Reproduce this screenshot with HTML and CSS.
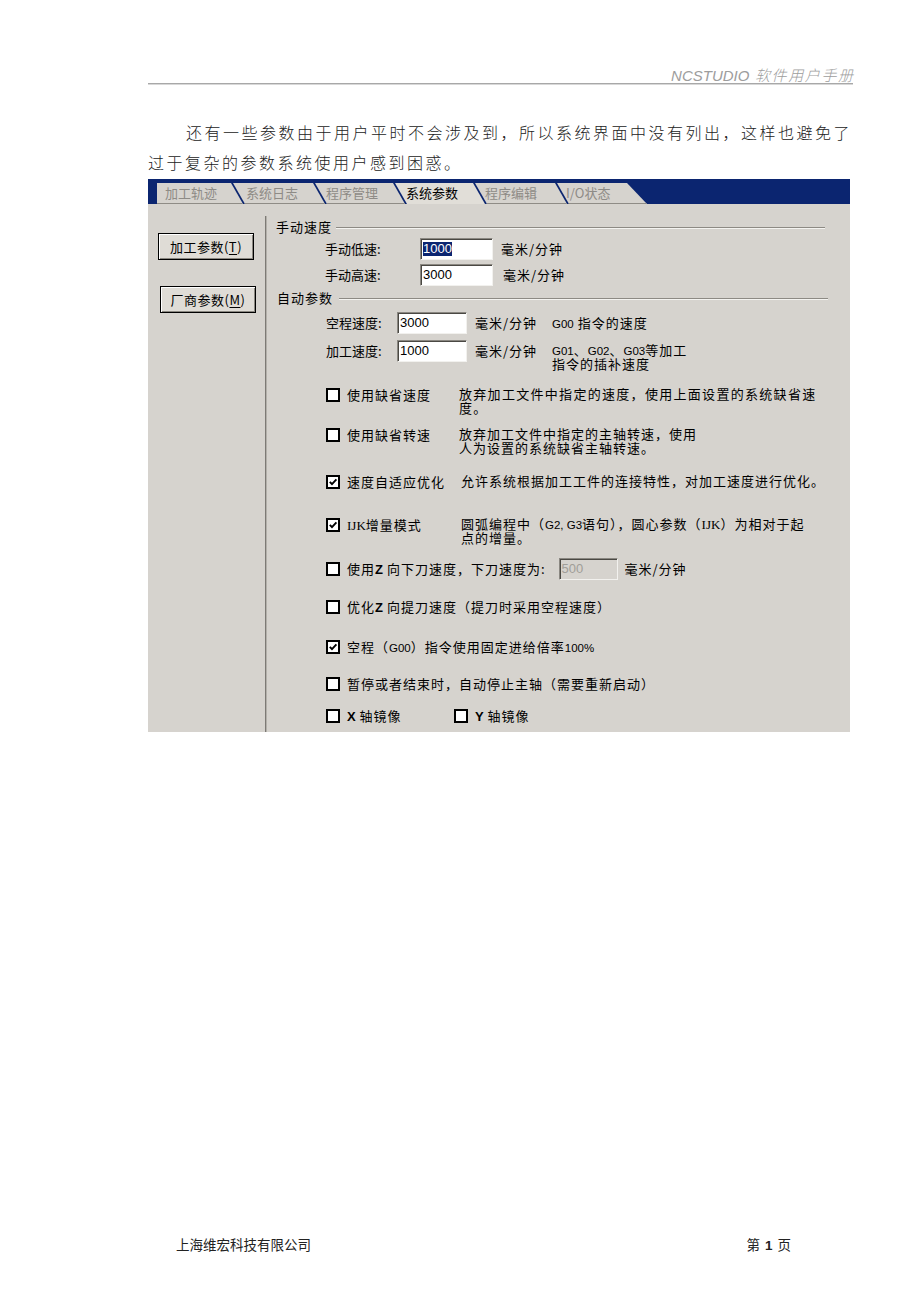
FILE: index.html
```html
<!DOCTYPE html>
<html lang="zh-CN">
<head>
<meta charset="utf-8">
<title>NCSTUDIO 软件用户手册</title>
<link rel="stylesheet" href="styles.css">
</head>
<body>
<header class="doc-head"><span class="head-en">NCSTUDIO</span> <span class="head-zh">软件用户手册</span></header>

<p class="intro">还有一些参数由于用户平时不会涉及到，所以系统界面中没有列出，这样也避免了<br>过于复杂的参数系统使用户感到困惑。</p>

<div class="shot">
  <div class="tabbar">
    <div class="tab first">加工轨迹</div>
    <div class="tab t2">系统日志</div>
    <div class="tab t3">程序管理</div>
    <div class="tab t4 active">系统参数</div>
    <div class="tab t5">程序编辑</div>
    <div class="tab t6">I/O状态</div>
  </div>
  <div class="body">
    <div class="side">
      <div class="btn">加工参数(<u>T</u>)</div>
      <div class="btn btn2">厂商参数(<u>M</u>)</div>
    </div>
    <div class="divider"></div>
    <div class="pane">
      <div class="group"><span class="glabel">手动速度</span><span class="etch"></span></div>
      <div class="frow r1">
        <span class="flabel fl1">手动低速:</span>
        <span class="field f1"><span class="sel">1000</span></span>
        <span class="unit">毫米/分钟</span>
      </div>
      <div class="frow r2">
        <span class="flabel fl1">手动高速:</span>
        <span class="field f1"><span class="num">3000</span></span>
        <span class="unit u2">毫米/分钟</span>
      </div>

      <div class="group g2"><span class="glabel">自动参数</span><span class="etch e2"></span></div>
      <div class="frow a1">
        <span class="flabel fl2">空程速度:</span>
        <span class="field f2"><span class="num">3000</span></span>
        <span class="unit u3">毫米/分钟</span>
        <span class="note"><span class="lat">G00</span> 指令的速度</span>
      </div>
      <div class="frow a2">
        <span class="flabel fl2">加工速度:</span>
        <span class="field f2"><span class="num">1000</span></span>
        <span class="unit u3">毫米/分钟</span>
        <span class="note note2"><span class="ln"><span class="lat">G01</span>、<span class="lat">G02</span>、<span class="lat">G03</span>等加工</span><span class="ln">指令的插补速度</span></span>
      </div>

      <div class="crow c1">
        <span class="cb"></span>
        <span class="clabel">使用缺省速度</span>
        <span class="desc d1"><span class="ln">放弃加工文件中指定的速度，使用上面设置的系统缺省速</span><span class="ln">度。</span></span>
      </div>
      <div class="crow c2">
        <span class="cb"></span>
        <span class="clabel">使用缺省转速</span>
        <span class="desc"><span class="ln">放弃加工文件中指定的主轴转速，使用</span><span class="ln">人为设置的系统缺省主轴转速。</span></span>
      </div>
      <div class="crow c3">
        <span class="cb on"><svg viewBox="0 0 10 10" width="10" height="10"><path d="M1.8 4.8 L4 7.2 L8.4 2.4" fill="none" stroke="#000" stroke-width="1.9"/></svg></span>
        <span class="clabel">速度自适应优化</span>
        <span class="desc d2">允许系统根据加工工件的连接特性，对加工速度进行优化。</span>
      </div>
      <div class="crow c4">
        <span class="cb on"><svg viewBox="0 0 10 10" width="10" height="10"><path d="M1.8 4.8 L4 7.2 L8.4 2.4" fill="none" stroke="#000" stroke-width="1.9"/></svg></span>
        <span class="clabel"><span class="ijk">IJK</span>增量模式</span>
        <span class="desc d2"><span class="ln">圆弧编程中（<span class="lat">G2, G3</span>语句），圆心参数（<span class="ijk">IJK</span>）为相对于起</span><span class="ln">点的增量。</span></span>
      </div>
      <div class="crow c5">
        <span class="cb"></span>
        <span class="ctext">使用<b>Z</b> 向下刀速度，下刀速度为:</span>
        <span class="field f3"><span class="num dis">500</span></span>
        <span class="unit u5">毫米/分钟</span>
      </div>
      <div class="crow c6">
        <span class="cb"></span>
        <span class="ctext">优化<b>Z</b> 向提刀速度（提刀时采用空程速度）</span>
      </div>
      <div class="crow c7">
        <span class="cb on"><svg viewBox="0 0 10 10" width="10" height="10"><path d="M1.8 4.8 L4 7.2 L8.4 2.4" fill="none" stroke="#000" stroke-width="1.9"/></svg></span>
        <span class="ctext">空程（<span class="lat">G00</span>）指令使用固定进给倍率<span class="lat">100%</span></span>
      </div>
      <div class="crow c8">
        <span class="cb"></span>
        <span class="ctext">暂停或者结束时，自动停止主轴（需要重新启动）</span>
      </div>
      <div class="crow c9">
        <span class="cb"></span>
        <span class="clabel xl"><b>X</b> 轴镜像</span>
        <span class="cb"></span>
        <span class="ctext"><b>Y</b> 轴镜像</span>
      </div>
    </div>
  </div>
</div>

<footer class="doc-foot">
  <span>上海维宏科技有限公司</span>
  <span>第<b>1</b>页</span>
</footer>
</body>
</html>
```

FILE: styles.css
```css
* { box-sizing: border-box; }
html, body { margin: 0; padding: 0; background: #fff; }
body {
  width: 920px;
  height: 1302px;
  overflow: hidden;
  font-family: "Noto Sans CJK SC", "Liberation Sans", sans-serif;
  color: #000;
}

/* document header */
.doc-head {
  margin-left: 148px;
  width: 705px;
  height: 84px;
  padding-top: 65px;
  border-bottom: 1px solid #a8a8a8;
  box-shadow: 0 1px 0 #d8d8d8;
  text-align: right;
  line-height: 18px;
  color: #9d9d9d;
  font-style: italic;
  white-space: nowrap;
}
.head-en { font-family: "Liberation Sans", sans-serif; font-size: 15px; margin-right: 2px; }
.head-zh { font-size: 15px; letter-spacing: 1.6px; font-weight: 300; margin-right: -1.6px; }

/* intro paragraph */
.intro {
  margin: 33px 0 0 148px;
  width: 712px;
  font-size: 16px;
  line-height: 30px;
  letter-spacing: 2.5px;
  text-indent: 38px;
  color: #222;
  font-weight: 300;
  white-space: nowrap;
}

/* screenshot of the software */
.shot {
  margin: 2px 0 0 148px;
  width: 702px;
  height: 553px;
  background: #d6d3ce;
  overflow: hidden;
}
.tabbar {
  height: 25px;
  background: #0b2570;
  display: flex;
  align-items: flex-end;
  padding-left: 9px;
}
.tab {
  flex: none;
  height: 21px;
  margin-left: -10px;
  padding-left: 11px;
  background: #d6d3ce;
  color: #8e8b86;
  font-size: 13px;
  line-height: 20px;
  white-space: nowrap;
  border-bottom: 1px solid #8f8c86;
  clip-path: polygon(0 0, calc(100% - 12px) 0, 100% 100%, 12px 100%);
}
.tab.first {
  margin-left: 0;
  width: 86px;
  padding-left: 8px;
  clip-path: polygon(0 0, calc(100% - 12px) 0, 100% 100%, 0 100%);
}
.tab.t2 { width: 92px; padding-left: 13px; }
.tab.t3 { width: 90px; }
.tab.t4 { width: 90px; }
.tab.t5 { width: 92px; padding-left: 10px; }
.tab.t6 {
  width: 90px;
  padding-left: 9px;
  clip-path: polygon(0 0, calc(100% - 20px) 0, 100% 100%, 12px 100%);
}
.tab.active {
  background: #e1ded8;
  color: #000;
  border-bottom: none;
}

.body { display: flex; height: 528px; }
.side { flex: none; width: 117px; padding: 29px 0 0 10px; }
.btn {
  width: 96px;
  height: 27px;
  border: 1px solid #000;
  background: #dfdcd6;
  box-shadow: inset 1px 1px 0 #fff, inset -1px -1px 0 #8a8780;
  display: flex;
  align-items: center;
  justify-content: center;
  font-size: 13px;
  letter-spacing: 0.5px;
}
.btn u { text-underline-offset: 2px; }
.btn2 { margin-top: 26px; margin-left: 2px; }
.divider {
  flex: none;
  width: 2px;
  margin-top: 12px;
  border-left: 1px solid #7d7a75;
  border-right: 1px solid #b3b0aa;
}

.pane {
  flex: 1;
  padding: 15px 0 0 9px;
  font-size: 13px;
  letter-spacing: 1px;
  line-height: 16px;
  white-space: nowrap;
}
.group { display: flex; align-items: center; height: 16px; }
.g2 { margin-top: 4px; padding-left: 1px; }
.etch {
  flex: 1;
  height: 2px;
  margin: 2px 25px 0 4px;
  border-top: 1px solid #8d8a84;
  border-bottom: 1px solid #f4f3f0;
}
.etch.e2 { margin-left: 6px; margin-right: 22px; }

.frow { display: flex; align-items: center; height: 22px; }
.r1 { margin-top: 3px; }
.r2 { margin-top: 4px; }
.a1 { margin-top: 6px; }
.a2 { margin-top: 6px; align-items: flex-start; height: auto; }
.flabel { flex: none; line-height: 22px; letter-spacing: 0; }
.fl1 { margin-left: 49px; width: 95px; }
.fl2 { margin-left: 50px; width: 71px; }
.field {
  flex: none;
  height: 22px;
  background: #fff;
  border-top: 1px solid #8a8781;
  border-left: 1px solid #8a8781;
  border-right: 1px solid #f2f1ee;
  border-bottom: 1px solid #f2f1ee;
  box-shadow: inset 1px 1px 0 #4a4843;
  padding: 3px 0 0 2px;
  font-family: "Liberation Sans", sans-serif;
  font-size: 13px;
  letter-spacing: 0;
  line-height: 14px;
}
.f1 { width: 73px; }
.f2 { width: 70px; }
.f3 { width: 59px; margin-left: 13px; background: #d6d3ce; }
.sel { background: #0b2570; color: #fff; display: inline-block; }
.num { display: inline-block; }
.dis { color: #a19e98; }
.unit { flex: none; margin-left: 8px; line-height: 22px; }
.u2 { margin-left: 10px; }
.u3 { width: 77px; }
.u5 { margin-left: 7px; }
.note { line-height: 22px; }
.note2 {
  line-height: 14px;
  padding-top: 4px;
  font-family: "Liberation Sans", "Noto Sans CJK SC", sans-serif;
}
.ln { display: block; height: 14px; }
.lat { font-family: "Liberation Sans", sans-serif; font-size: 11.5px; letter-spacing: 0; }
.ijk { font-family: "Liberation Serif", serif; font-size: 13px; letter-spacing: 0; }

.crow { display: flex; align-items: flex-start; margin-left: 50px; line-height: 14px; }
.cb {
  flex: none;
  width: 14px;
  height: 14px;
  margin-right: 7px;
  border: 2px solid #000;
  background: #fff;
  display: flex;
  align-items: center;
  justify-content: center;
}
.cb svg { display: block; }
.clabel { flex: none; width: 112px; }
.clabel.xl { width: 107px; }
.desc {
  flex: none;
  font-family: "Liberation Sans", "Noto Sans CJK SC", sans-serif;
}
.d1 { letter-spacing: 1.3px; }
.d2 { margin-left: 2px; }
.ctext { flex: none; }
.ctext b, .clabel b { font-family: "Liberation Sans", sans-serif; font-weight: bold; letter-spacing: 0; }

.c1 { margin-top: 16px; }
.c2 { margin-top: 12px; }
.c3 { margin-top: 19px; }
.c4 { margin-top: 29px; }
.c5 { margin-top: 12px; height: 22px; align-items: center; }
.c6 { margin-top: 20px; }
.c7 { margin-top: 25px; }
.c8 { margin-top: 22px; }
.c9 { margin-top: 18px; }

/* footer */
.doc-foot {
  margin: 503px 0 0 176px;
  width: 615px;
  display: flex;
  justify-content: space-between;
  font-size: 13.5px;
  line-height: 18px;
  color: #222;
}
.doc-foot b { font-family: "Liberation Sans", sans-serif; font-weight: bold; margin: 0 5px; }
```
